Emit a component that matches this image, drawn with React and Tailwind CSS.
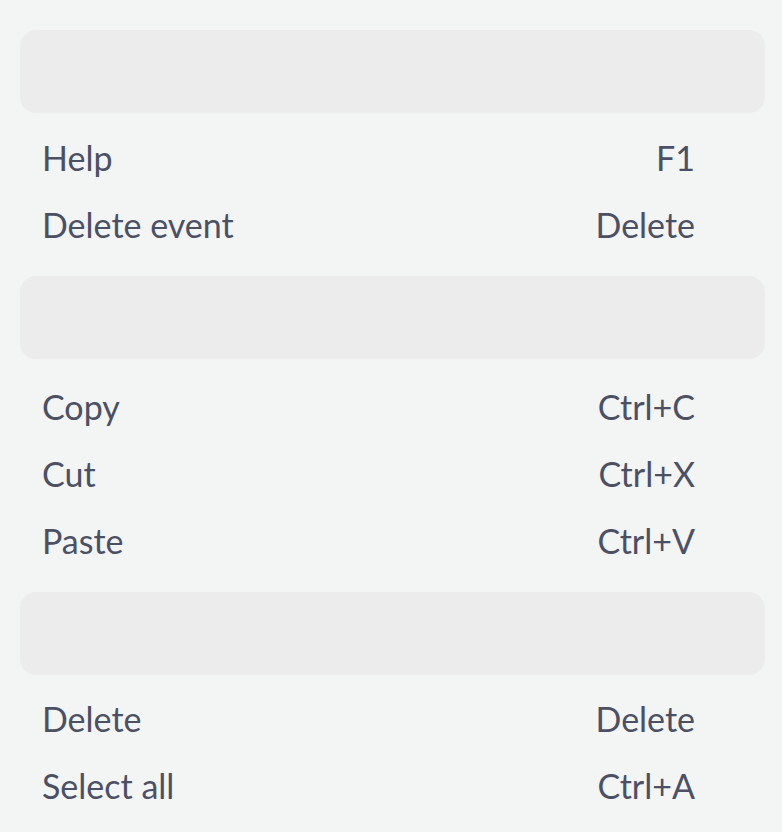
import React from 'react';

const sections = [
  {
    gap: 'mt-[11px]',
    items: [
      { label: 'Help', shortcut: 'F1' },
      { label: 'Delete event', shortcut: 'Delete' },
    ],
  },
  {
    gap: 'mt-[14px]',
    items: [
      { label: 'Copy', shortcut: 'Ctrl+C' },
      { label: 'Cut', shortcut: 'Ctrl+X' },
      { label: 'Paste', shortcut: 'Ctrl+V' },
    ],
  },
  {
    gap: 'mt-[10px]',
    items: [
      { label: 'Delete', shortcut: 'Delete' },
      { label: 'Select all', shortcut: 'Ctrl+A' },
    ],
  },
];

export default function App() {
  return (
    <div
      className="w-[782px] h-[832px] overflow-hidden bg-[#f3f4f4] pt-[30px] pl-[20px] pr-[17px]"
      style={{ fontFamily: 'Lato, "Noto Sans", sans-serif' }}
    >
      {sections.map((section, i) => (
        <div key={i} className={i > 0 ? 'mt-[18px]' : ''}>
          {/* empty header bar */}
          <div className="h-[83px] rounded-[16px] bg-[#ececec]" />
          <ul className={section.gap}>
            {section.items.map((item) => (
              <li
                key={item.label}
                className="h-[67px] flex items-center justify-between pl-[22px] pr-[70px] text-[34px] text-[#4b5064]"
              >
                <span>{item.label}</span>
                <span>{item.shortcut}</span>
              </li>
            ))}
          </ul>
        </div>
      ))}
    </div>
  );
}
